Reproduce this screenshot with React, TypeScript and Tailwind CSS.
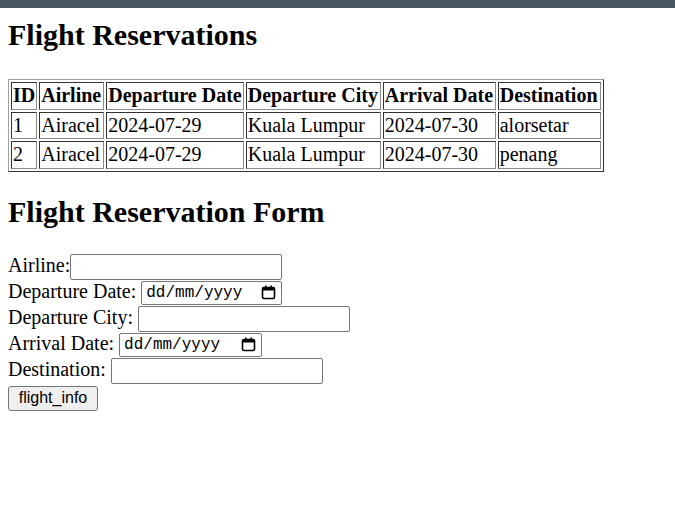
import React from 'react';

const flights = [
  { id: 1, airline: 'Airacel', depDate: '2024-07-29', depCity: 'Kuala Lumpur', arrDate: '2024-07-30', dest: 'alorsetar' },
  { id: 2, airline: 'Airacel', depDate: '2024-07-29', depCity: 'Kuala Lumpur', arrDate: '2024-07-30', dest: 'penang' },
];

const headers = [
  { label: 'ID', w: 'w-[26px]' },
  { label: 'Airline', w: 'w-[65px]' },
  { label: 'Departure Date', w: 'w-[137px]' },
  { label: 'Departure City', w: 'w-[135px]' },
  { label: 'Arrival Date', w: 'w-[113px]' },
  { label: 'Destination', w: 'w-[103px]' },
];

const cellCls =
  'border border-t-[#333] border-l-[#333] border-b-[#8a8a8a] border-r-[#8a8a8a] p-px text-left align-middle whitespace-nowrap';

const CalendarIcon = () => (
  <svg width="15" height="15" viewBox="0 0 15 15" fill="none">
    <rect x="1.5" y="2.5" width="12" height="11" rx="1.5" stroke="#000" strokeWidth="1.6" />
    <rect x="1.5" y="2.5" width="12" height="3" fill="#000" />
    <rect x="4" y="0.5" width="1.6" height="3" fill="#000" />
    <rect x="9.4" y="0.5" width="1.6" height="3" fill="#000" />
  </svg>
);

const DateField = ({ width }: { width: string }) => (
  <div
    className={`ml-[5px] flex items-center justify-between h-[24px] ${width} border border-[#767676] rounded-[2px] bg-white pl-[4px] pr-[5px] text-[16px] leading-none text-black`}
    style={{ fontFamily: '"Liberation Mono", "Courier New", monospace' }}
  >
    <span>dd/mm/yyyy</span>
    <CalendarIcon />
  </div>
);

const TextField = ({ className = '' }: { className?: string }) => (
  <input
    type="text"
    className={`h-[26px] w-[212px] border border-[#767676] rounded-[2px] bg-white px-[2px] text-[16px] outline-none ${className}`}
  />
);

export default function App() {
  return (
    <div className="min-h-screen bg-white text-black" style={{ fontFamily: '"Liberation Serif", "Times New Roman", serif' }}>
      <div className="h-2 bg-[#47565f]" />
      <div className="px-2">
        <h1 className="mt-[10px] mb-[28px] text-[30px] leading-[33px] font-bold">Flight Reservations</h1>

        <table className="border-separate border-spacing-[2px] border border-t-[#a0a0a0] border-l-[#a0a0a0] border-b-[#333] border-r-[#333] text-[20px] leading-[23.5px]">
          <thead>
            <tr>
              {headers.map(h => (
                <th key={h.label} className={`${cellCls} ${h.w} font-bold`}>{h.label}</th>
              ))}
            </tr>
          </thead>
          <tbody>
            {flights.map(f => (
              <tr key={f.id}>
                <td className={cellCls}>{f.id}</td>
                <td className={cellCls}>{f.airline}</td>
                <td className={cellCls}>{f.depDate}</td>
                <td className={cellCls}>{f.depCity}</td>
                <td className={cellCls}>{f.arrDate}</td>
                <td className={cellCls}>{f.dest}</td>
              </tr>
            ))}
          </tbody>
        </table>

        <h1 className="mt-[23px] mb-[26px] text-[30px] leading-[33px] font-bold">Flight Reservation Form</h1>

        <form className="flex flex-col text-[20px] leading-[23px]" onSubmit={e => e.preventDefault()}>
          <div className="flex items-center h-[26px] mb-px">
            <label className="mb-[3px]">Airline:</label>
            <TextField />
          </div>
          <div className="flex items-center h-[24px] mb-px">
            <label className="mb-[3px]">Departure Date:</label>
            <DateField width="w-[141px]" />
          </div>
          <div className="flex items-center h-[26px] mb-px">
            <label className="mb-[3px]">Departure City:</label>
            <TextField className="ml-[5px]" />
          </div>
          <div className="flex items-center h-[24px] mb-px">
            <label className="mb-[3px]">Arrival Date:</label>
            <DateField width="w-[143px]" />
          </div>
          <div className="flex items-center h-[26px] mb-[2px]">
            <label className="mb-[3px]">Destination:</label>
            <TextField className="ml-[5px]" />
          </div>
          <div className="flex">
            <button
              type="submit"
              className="h-[25px] w-[90px] border border-[#767676] rounded-[3px] bg-[#efefef] text-[16px] leading-none text-black"
              style={{ fontFamily: '"Liberation Sans", Arial, sans-serif' }}
            >
              flight_info
            </button>
          </div>
        </form>
      </div>
    </div>
  );
}
